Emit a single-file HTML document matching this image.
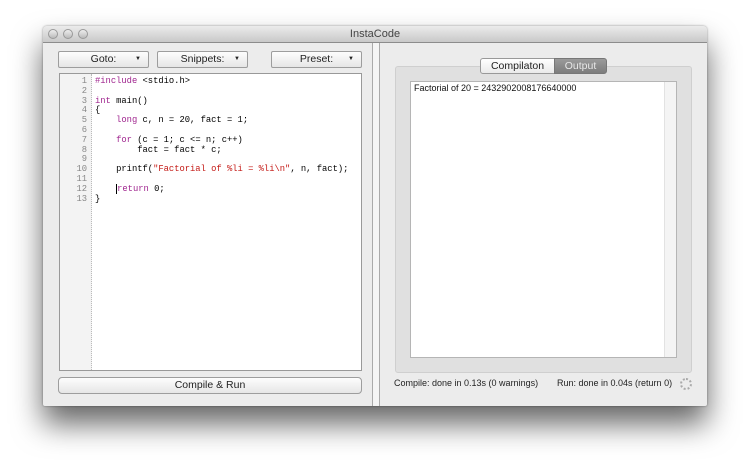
<!DOCTYPE html>
<html><head><style>
body{margin:0;width:750px;height:466px;background:#fff;position:relative;overflow:hidden;font-family:"Liberation Sans",sans-serif;}
.win{position:absolute;left:43px;top:26px;width:664px;height:380px;background:#ececec;border-radius:4px 4px 2px 2px;box-shadow:0 18px 30px rgba(0,0,0,.6),0 0 2px rgba(0,0,0,.4);overflow:hidden}
.title{position:absolute;left:0;top:0;width:664px;height:16px;background:linear-gradient(#ebebeb,#c9c9c9);border-bottom:1px solid #8c8c8c;text-align:center;font-size:11px;line-height:16px;color:#444}
.dot{position:absolute;top:3px;width:8px;height:8px;border-radius:50%;border:1px solid #999;background:linear-gradient(#eee,#bbb)}
.btn{position:absolute;height:15px;border:1px solid #9d9d9d;border-radius:2px;background:linear-gradient(#fdfdfd,#e6e6e6);font-size:10.5px;line-height:15px;text-align:center;color:#222}
.btn .ar{position:absolute;right:7px;top:0;font-size:6px}
.ed{position:absolute;left:16px;top:47px;width:301px;height:296px;border:1px solid #999;background:#fff}
.gut{position:absolute;left:0;top:0;width:31px;height:296px;background:#f3f3f3;border-right:1px dotted #bbb}
pre{margin:0;position:absolute;top:3px;font-family:"Liberation Mono",monospace;font-size:8.8px;line-height:9.8px}
.num{right:0;width:27px;text-align:right;left:0;color:#888}
.k{color:#a0268f}.s{color:#c41a16}
.div{position:absolute;left:329px;top:17px;width:6px;height:364px;border-left:1px solid #aaa;border-right:1px solid #aaa;background:#f5f5f5}
.grp{position:absolute;left:352px;top:40px;width:295px;height:305px;border:1px solid #cfcfcf;border-radius:3px;background:#e0e0e0}
.out{position:absolute;left:14px;top:14px;width:265px;height:275px;border:1px solid #b5b5b5;background:#fff}
.sb{position:absolute;right:0;top:0;width:11px;height:275px;background:#f4f4f4;border-left:1px solid #e2e2e2}
.tab{position:absolute;top:32px;height:14px;font-size:10.5px;line-height:14px;text-align:center}
.st{position:absolute;top:352px;font-size:9px;color:#222}
</style></head><body>
<div class="win">
<div class="title">InstaCode</div>
<div class="dot" style="left:5px"></div><div class="dot" style="left:20px"></div><div class="dot" style="left:35px"></div>
<div class="btn" style="left:15px;top:25px;width:89px">Goto:<span class="ar">▼</span></div>
<div class="btn" style="left:114px;top:25px;width:89px">Snippets:<span class="ar">▼</span></div>
<div class="btn" style="left:228px;top:25px;width:89px">Preset:<span class="ar">▼</span></div>
<div class="ed"><div class="gut"></div>
<pre class="num">1
2
3
4
5
6
7
8
9
10
11
12
13</pre>
<pre style="left:35px"><span class="k">#include</span> &lt;stdio.h&gt;

<span class="k">int</span> main()
{
    <span class="k">long</span> c, n = 20, fact = 1;

    <span class="k">for</span> (c = 1; c &lt;= n; c++)
        fact = fact * c;

    printf(<span class="s">"Factorial of %li = %li\n"</span>, n, fact);

    <span style="border-left:1px solid #000"></span><span class="k">return</span> 0;
}</pre></div>
<div class="btn" style="left:15px;top:351px;width:302px;border-radius:4px">Compile &amp; Run</div>
<div class="div"></div>
<div class="grp"><div class="out"><div style="position:absolute;left:3px;top:1px;font-size:9px;color:#111">Factorial of 20 = 2432902008176640000</div><div class="sb"></div></div></div>
<div class="tab" style="left:437px;width:73px;border:1px solid #999;border-radius:3px 0 0 3px;background:linear-gradient(#fff,#eaeaea);color:#222">Compilaton</div>
<div class="tab" style="left:511px;width:51px;border:1px solid #777;border-radius:0 3px 3px 0;background:linear-gradient(#9a9a9a,#7d7d7d);color:#e8e8e8">Output</div>
<div class="st" style="left:351px">Compile: done in 0.13s (0 warnings)</div>
<div class="st" style="left:514px">Run: done in 0.04s (return 0)</div>
<div style="position:absolute;left:637px;top:352px;width:8px;height:8px;border-radius:50%;border:2px dotted #aaa"></div>
</div>
</body></html>
